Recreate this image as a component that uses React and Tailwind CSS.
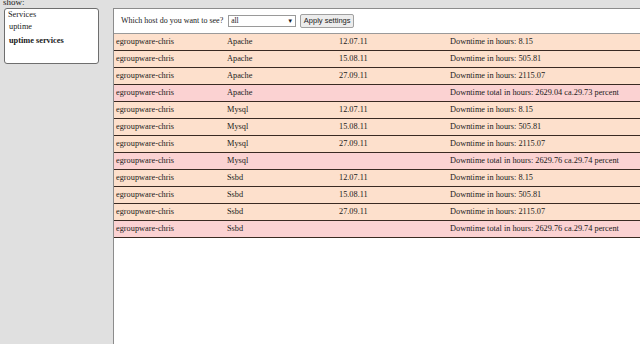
const rows = [
  ['Apache', '12.07.11', 'Downtime in hours: 8.15', false],
  ['Apache', '15.08.11', 'Downtime in hours: 505.81', false],
  ['Apache', '27.09.11', 'Downtime in hours: 2115.07', false],
  ['Apache', '', 'Downtime total in hours: 2629.04 ca.29.73 percent', true],
  ['Mysql', '12.07.11', 'Downtime in hours: 8.15', false],
  ['Mysql', '15.08.11', 'Downtime in hours: 505.81', false],
  ['Mysql', '27.09.11', 'Downtime in hours: 2115.07', false],
  ['Mysql', '', 'Downtime total in hours: 2629.76 ca.29.74 percent', true],
  ['Ssbd', '12.07.11', 'Downtime in hours: 8.15', false],
  ['Ssbd', '15.08.11', 'Downtime in hours: 505.81', false],
  ['Ssbd', '27.09.11', 'Downtime in hours: 2115.07', false],
  ['Ssbd', '', 'Downtime total in hours: 2629.76 ca.29.74 percent', true],
]

export default function App() {
  return (
    <div className="flex w-[640px] h-[344px] overflow-hidden bg-[#e0e0e0] text-[8.3px] text-[#1a1a1a] font-['Liberation_Serif',serif]">
      {/* left menu */}
      <div className="w-[113px] shrink-0 flex flex-col">
        <div className="h-[8px] leading-[8px] pl-[3px] -mt-[2px] text-[9px]">show:</div>
        <div className="ml-[4px] mt-[2px] w-[95px] h-[56px] bg-white border border-[#6e6e6e] rounded-[3px] px-[3px] flex flex-col text-[8.3px]">
          <span className="leading-[11px]">Services</span>
          <span className="leading-[14px] pl-[1px]">uptime</span>
          <span className="leading-[13px] pl-[1px] font-bold">uptime services</span>
        </div>
      </div>

      {/* main panel */}
      <div className="flex-1 mt-[8px] bg-white border-t border-l border-[#8c8c8c] flex flex-col">
        <div className="h-[24px] flex items-center pl-[7px]">
          <span className="text-[8px]">Which host do you want to see?</span>
          <div className="ml-[5px] w-[68px] h-[12px] border border-[#9a9a9a] bg-white flex items-center justify-between px-[2px] text-[7.5px]">
            <span>all</span>
            <span className="text-[6px]">▼</span>
          </div>
          <div className="ml-[4px] w-[54px] h-[14px] border border-[#a0a0a0] rounded-[2px] bg-[#ececec] flex items-center justify-center text-[7.5px] font-['Liberation_Sans',sans-serif]">
            Apply settings
          </div>
        </div>
        <div className="border-t border-[#9a9a9a]">
          {rows.map(([svc, date, text, total], i) => (
            <div
              key={i}
              className={`grid grid-cols-[111px_112px_111px_1fr] h-[17px] items-center border-b border-[#3a2a22] ${total ? 'bg-[#fbd2d2]' : 'bg-[#fde0cc]'}`}
            >
              <span className="pl-[2px]">egroupware-chris</span>
              <span className="pl-[2px]">{svc}</span>
              <span className="pl-[2px]">{date}</span>
              <span className="pl-[2px]">{text}</span>
            </div>
          ))}
        </div>
      </div>
    </div>
  )
}
